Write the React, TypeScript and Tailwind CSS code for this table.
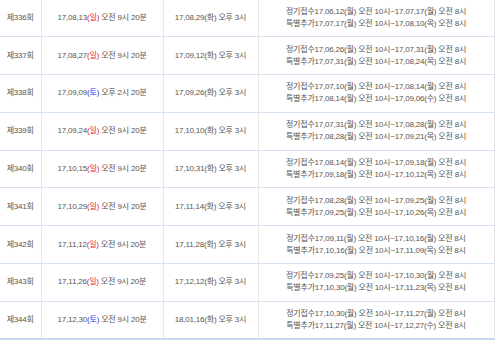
import React from "react";

type Row = {
  no: string;
  draw: string;
  day: string;
  drawRest: string;
  announce: string;
  regular: string;
  special: string;
};

const rows: Row[] = [
  { no: "제336회", draw: "17,08,13", day: "일", drawRest: "오전 9시 20분", announce: "17,08,29(화) 오후 3시", regular: "정기접수17,06,12(월) 오전 10시~17,07,17(월) 오전 8시", special: "특별추가17,07,17(월) 오전 10시~17,08,10(목) 오전 8시" },
  { no: "제337회", draw: "17,08,27", day: "일", drawRest: "오전 9시 20분", announce: "17,09,12(화) 오후 3시", regular: "정기접수17,06,26(월) 오전 10시~17,07,31(월) 오전 8시", special: "특별추가17,07,31(월) 오전 10시~17,08,24(목) 오전 8시" },
  { no: "제338회", draw: "17,09,09", day: "토", drawRest: "오후 2시 20분", announce: "17,09,26(화) 오후 3시", regular: "정기접수17,07,10(월) 오전 10시~17,08,14(월) 오전 8시", special: "특별추가17,08,14(월) 오전 10시~17,09,06(수) 오전 8시" },
  { no: "제339회", draw: "17,09,24", day: "일", drawRest: "오전 9시 20분", announce: "17,10,10(화) 오후 3시", regular: "정기접수17,07,31(월) 오전 10시~17,08,28(월) 오전 8시", special: "특별추가17,08,28(월) 오전 10시~17,09,21(목) 오전 8시" },
  { no: "제340회", draw: "17,10,15", day: "일", drawRest: "오전 9시 20분", announce: "17,10,31(화) 오후 3시", regular: "정기접수17,08,14(월) 오전 10시~17,09,18(월) 오전 8시", special: "특별추가17,09,18(월) 오전 10시~17,10,12(목) 오전 8시" },
  { no: "제341회", draw: "17,10,29", day: "일", drawRest: "오전 9시 20분", announce: "17,11,14(화) 오후 3시", regular: "정기접수17,08,28(월) 오전 10시~17,09,25(월) 오전 8시", special: "특별추가17,09,25(월) 오전 10시~17,10,26(목) 오전 8시" },
  { no: "제342회", draw: "17,11,12", day: "일", drawRest: "오전 9시 20분", announce: "17,11,28(화) 오후 3시", regular: "정기접수17,09,11(월) 오전 10시~17,10,16(월) 오전 8시", special: "특별추가17,10,16(월) 오전 10시~17,11,09(목) 오전 8시" },
  { no: "제343회", draw: "17,11,26", day: "일", drawRest: "오전 9시 20분", announce: "17,12,12(화) 오후 3시", regular: "정기접수17,09,25(월) 오전 10시~17,10,30(월) 오전 8시", special: "특별추가17,10,30(월) 오전 10시~17,11,23(목) 오전 8시" },
  { no: "제344회", draw: "17,12,30", day: "토", drawRest: "오전 9시 20분", announce: "18,01,16(화) 오후 3시", regular: "정기접수17,10,30(월) 오전 10시~17,11,27(월) 오전 8시", special: "특별추가17,11,27(월) 오전 10시~17,12,27(수) 오전 8시" },
];

const App = () => {
  return (
    <div
      className="w-[500px] h-[342px] overflow-hidden bg-white text-[#555] text-[8px] leading-[12px] tracking-[-0.2px]"
      style={{ fontFamily: '"Liberation Sans", "Noto Sans CJK KR", sans-serif' }}
    >
      <table className="-mt-[1px] w-[494px] table-fixed border-collapse border-r border-[#e6e6e6]">
        <colgroup>
          <col className="w-[41px]" />
          <col className="w-[122px]" />
          <col className="w-[95px]" />
          <col className="w-[236px]" />
        </colgroup>
        <tbody>
          {rows.map((row, i) => (
            <tr
              key={row.no}
              className={`h-[37.8px] ${
                i === rows.length - 1
                  ? "border-b-2 border-b-[#c9d9ed]"
                  : "border-b border-b-[#d4e1f1]"
              }`}
            >
              <td className="border-r border-r-[#e6e6e6] text-center p-0">{row.no}</td>
              <td className="border-r border-r-[#e6e6e6] text-center p-0">
                {row.draw}
                <span className={row.day === "토" ? "text-[#2e3bf0]" : "text-[#ec1c1c]"}>
                  ({row.day})
                </span>{" "}
                {row.drawRest}
              </td>
              <td className="border-r border-r-[#e6e6e6] text-center p-0">{row.announce}</td>
              <td className="text-center p-0">
                <div>{row.regular}</div>
                <div>{row.special}</div>
              </td>
            </tr>
          ))}
        </tbody>
      </table>
    </div>
  );
};

export default App;
